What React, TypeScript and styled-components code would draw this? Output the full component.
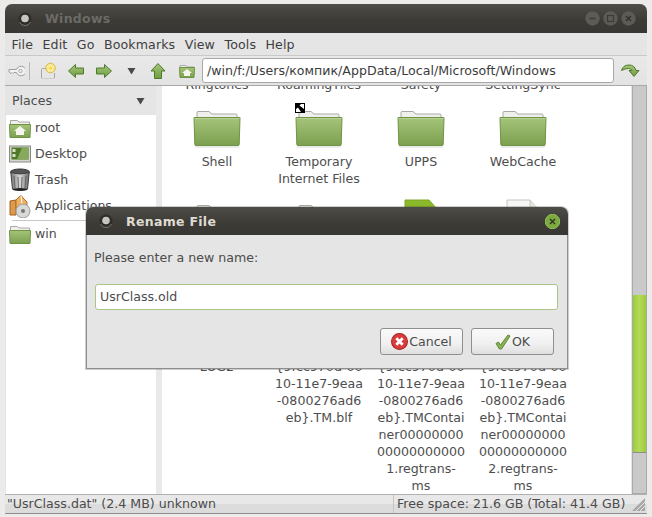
import React from "react";
import styled, { createGlobalStyle } from "styled-components";

const Global = createGlobalStyle`
  html, body { margin: 0; padding: 0; background: #ecebe9; }
  body { width: 652px; height: 517px; overflow: hidden; font-family: "DejaVu Sans", sans-serif; font-size: 12.6px; color: #4c4c4c; }
`;

const Page = styled.div`
  padding: 4px 5px 0 5px;
  width: 642px;
  height: 513px;
`;
const Win = styled.div`
  position: relative;
  width: 642px;
  height: 510px;
  display: flex;
  flex-direction: column;
  background: #e5e5e5;
  border-radius: 7px 7px 0 0;
  overflow: hidden;
  box-shadow: inset 0 -1px 0 #8e8e8e;
`;
const TitleBar = styled.div`
  height: 29px;
  flex: none;
  display: flex;
  align-items: center;
  padding: 0 11px 0 11px;
  background: linear-gradient(#4e4d48, #3c3b36 55%, #383733);
`;
const TitleText = styled.div<{ $active?: boolean }>`
  font-weight: bold;
  font-size: 12.5px;
  letter-spacing: 0.3px;
  margin-left: 11px;
  color: ${(p) => (p.$active ? "#dfdbd2" : "#6c6b66")};
`;
const TitleSpacer = styled.div`
  flex: 1;
`;
const WinBtns = styled.div`
  display: flex;
  gap: 3px;
`;
const MenuBar = styled.div`
  height: 22px;
  flex: none;
  display: flex;
  align-items: center;
  gap: 9.5px;
  padding-left: 6.5px;
  background: #e5e5e5;
  letter-spacing: 0.1px;
  span { color: #3f3f3f; }
`;
const ToolBar = styled.div`
  flex: none;
  display: flex;
  align-items: center;
  padding-left: 2px;
  background: linear-gradient(#e9e9e9, #e3e3e3);
  border-top: 1px solid #c9c9c9;
  border-bottom: 1px solid #a8a8a8;
  box-sizing: border-box;
  height: 31px;
`;
const ToolIcon = styled.div<{ $w: number; $ml?: number }>`
  width: ${(p) => p.$w}px;
  margin-left: ${(p) => p.$ml ?? 0}px;
  height: 22px;
  flex: none;
  display: flex;
  align-items: center;
  justify-content: center;
`;
const ToolSep = styled.div`
  width: 1px;
  height: 18px;
  background: #b8b8b8;
  margin: 0 9px 0 4px;
`;
const PathEntry = styled.div`
  width: 412px;
  height: 25px;
  flex: none;
  margin-left: 6px;
  box-sizing: border-box;
  border: 1px solid #a9a9a9;
  border-radius: 3px;
  background: #fff;
  padding-left: 4px;
  display: flex;
  align-items: center;
  color: #3c3c3c;
  white-space: nowrap;
`;
const Main = styled.div`
  flex: 1;
  min-height: 0;
  display: flex;
`;
const Side = styled.div`
  width: 151px;
  flex: none;
  display: flex;
  flex-direction: column;
`;
const SideHead = styled.div`
  height: 29px;
  flex: none;
  display: flex;
  align-items: center;
  justify-content: space-between;
  padding: 0 11px 0 7px;
`;
const SideList = styled.div`
  flex: 1;
  background: #fff;
  margin-left: 1px;
  display: flex;
  flex-direction: column;
`;
const SideRow = styled.div`
  height: 26px;
  flex: none;
  display: flex;
  align-items: center;
  gap: 4px;
  padding-left: 3px;
  white-space: nowrap;
`;
const SideName = styled.span`
  padding-bottom: 2px;
`;
const SideDivider = styled.div`
  height: 1px;
  margin: 1px 0 0 6px;
  background: #c8c8c8;
`;
const Sash = styled.div`
  width: 6px;
  flex: none;
  background: #e9e9e9;
`;
const IconView = styled.div`
  width: 469px;
  flex: none;
  background: #fff;
  overflow: hidden;
`;
const IconGrid = styled.div`
  margin: -10px 0 0 4px;
  display: grid;
  grid-template-columns: repeat(4, 102px);
  grid-template-rows: 29px 94px 111px auto;
`;
const Cell = styled.div`
  display: flex;
  flex-direction: column;
  align-items: center;
`;
const IconBox = styled.div`
  position: relative;
  width: 48px;
  height: 48px;
  flex: none;
`;
const Emblem = styled.div`
  position: absolute;
  left: 0;
  top: -2px;
  width: 10px;
  height: 10px;
  box-sizing: border-box;
  background: #fff;
  border: 1px solid #000;
  line-height: 0;
`;
const Label = styled.div`
  text-align: center;
  line-height: 17px;
  white-space: nowrap;
  color: #4e4e4e;
`;
const ScrollTrack = styled.div`
  width: 15px;
  flex: none;
  margin-left: 1px;
  box-sizing: border-box;
  background: #c9c9c9;
  border: 1px solid #a9a9a9;
  border-width: 0 1px 1px 1px;
  padding-top: 209px;
`;
const ScrollThumb = styled.div`
  height: 157px;
  background: linear-gradient(90deg, #9bcb3c, #b4dc58 50%, #9bcb3c);
  border-bottom: 1px solid #8d8d8d;
`;
const Status = styled.div`
  height: 20px;
  flex: none;
  box-sizing: border-box;
  display: flex;
  align-items: center;
  border-top: 1px solid #b0b0b0;
  border-bottom: 1px solid #8e8e8e;
  background: linear-gradient(#e8e8e8 50%, #dcdcdc 50%);
  white-space: nowrap;
`;
const StatusLeft = styled.div`
  width: 389px;
  flex: none;
  box-sizing: border-box;
  padding: 0 0 1px 2px;
  border-right: 1px solid #c4c4c4;
  height: 100%;
  display: flex;
  align-items: center;
`;
const StatusRight = styled.div`
  flex: 1;
  padding: 0 0 1px 3px;
`;
const Grip = styled.div`
  width: 16px;
  height: 16px;
  flex: none;
  margin-right: 1px;
`;
const Dialog = styled.div`
  position: absolute;
  left: 81px;
  top: 203px;
  width: 482px;
  height: 162px;
  display: flex;
  flex-direction: column;
  border-radius: 7px 7px 0 0;
  overflow: hidden;
  background: #e5e5e5;
  box-shadow: 0 0 0 1px rgba(60, 60, 60, 0.25);
`;
const DialogBar = styled.div`
  height: 28px;
  flex: none;
  display: flex;
  align-items: center;
  padding: 0 8px 0 11px;
  background: linear-gradient(#4e4d48, #3c3b36 55%, #383733);
`;
const DialogBody = styled.div`
  flex: 1;
  box-sizing: border-box;
  border: 1px solid #8f8f8f;
  border-top: 0;
  padding: 14px 8px 0 7px;
  display: flex;
  flex-direction: column;
`;
const Prompt = styled.div`
  line-height: 17px;
`;
const NameEntry = styled.div`
  margin: 18px 1px 0 1px;
  height: 26px;
  box-sizing: border-box;
  border: 1px solid #a9c588;
  border-radius: 3px;
  background: #fff;
  padding: 0 0 2px 4px;
  display: flex;
  align-items: center;
`;
const DialogBtns = styled.div`
  display: flex;
  justify-content: flex-end;
  gap: 8px;
  margin: 18px 5px 0 0;
`;
const Btn = styled.div`
  width: 83px;
  height: 27px;
  box-sizing: border-box;
  border: 1px solid #8f8f8f;
  border-radius: 3px;
  background: linear-gradient(#fafafa, #f0f0f0 60%, #dedede);
  display: flex;
  align-items: center;
  justify-content: center;
  gap: 1px;
`;

const Defs = () => (
  <svg width="0" height="0" style={{ position: "absolute" }}>
    <defs>
      <linearGradient id="fg" x1="0" y1="0" x2="0" y2="1">
        <stop offset="0" stopColor="#a5c47a" />
        <stop offset="1" stopColor="#7ca04f" />
      </linearGradient>
      <linearGradient id="ag" x1="0" y1="0" x2="0" y2="1">
        <stop offset="0" stopColor="#a4c879" />
        <stop offset="1" stopColor="#6f9a42" />
      </linearGradient>
      <linearGradient id="cg" x1="0" y1="0" x2="1" y2="0">
        <stop offset="0" stopColor="#777" />
        <stop offset="0.5" stopColor="#d8d8d8" />
        <stop offset="1" stopColor="#666" />
      </linearGradient>
      <linearGradient id="dg" x1="0" y1="0" x2="0" y2="1">
        <stop offset="0" stopColor="#8cbb2a" />
        <stop offset="1" stopColor="#6f9a22" />
      </linearGradient>
    </defs>
  </svg>
);

const Folder48 = () => (
  <svg width="48" height="48" viewBox="0 0 48 48">
    <rect x="2" y="40" width="44" height="3" rx="1.5" fill="#000" opacity="0.08" />
    <path d="M4 14V7.5q0-1 1-1h11l3 2.500h24q1 0 1 1V14z" fill="#efefec" stroke="#a8a8a4" />
    <path d="M1 12.500h46l-.8 27q0 1-1 1H2.800q-1 0-1-1z" fill="url(#fg)" stroke="#6f9345" />
    <path d="M1.500 13.500h45" stroke="#b8d296" />
  </svg>
);

const GreenDoc = () => (
  <svg width="48" height="48" viewBox="0 0 48 48">
    <path d="M8 1h24l9 10v36H8z" fill="url(#dg)" stroke="#7da524" />
  </svg>
);
const WhiteDoc = () => (
  <svg width="48" height="48" viewBox="0 0 48 48">
    <path d="M8 1h23l9 10v36H8z" fill="#f6f6f4" stroke="#c4c4c0" />
    <path d="M31 1v10h9" fill="#e4e4e0" stroke="#c4c4c0" />
  </svg>
);

const FolderSmall = ({ home }: { home?: boolean }) => (
  <svg width="22" height="22" viewBox="0 0 22 22">
    <path d="M1.500 8V3.500h7l1.500 1.500h10.500V8z" fill="#efefec" stroke="#a8a8a4" />
    <path d="M.5 7.500h21l-.5 13H1z" fill="url(#fg)" stroke="#6f9345" />
    {home && <path d="M11 9l6 5h-2v4h-8v-4H5z" fill="#f4f6ee" />}
  </svg>
);
const DesktopIco = () => (
  <svg width="22" height="22" viewBox="0 0 22 22">
    <rect x=".5" y="1.500" width="21" height="16" fill="#d4d4d0" stroke="#8a8a86" transform="translate(0 1.500)" />
    <rect x="2.500" y="4.500" width="17" height="12" fill="#4f7a26" />
    <path d="M8 16.500l5-12h6.500v12z" fill="#86a95c" />
    <rect x="3.500" y="6" width="3" height="3" fill="#d8e4c4" />
    <rect x="3.500" y="11" width="3" height="3" fill="#d8e4c4" />
  </svg>
);
const TrashIco = () => (
  <svg width="22" height="24" viewBox="0 0 22 24">
    <ellipse cx="11" cy="4" rx="9.500" ry="3" fill="#555" stroke="#333" />
    <path d="M1.800 4.500L3.500 21q7.500 3 15 0l1.700-16.500q-9 3-18.400 0z" fill="url(#cg)" stroke="#444" />
    <path d="M5 8l1 12M9 9l.5 12M13 9l-.5 12M17 8l-1 12" stroke="#555" strokeWidth=".8" />
    <ellipse cx="11" cy="21.500" rx="7.500" ry="1.500" fill="#222" />
  </svg>
);
const AppsIco = () => (
  <svg width="22" height="24" viewBox="0 0 22 24">
    <path d="M1 7l6-1v15H1z" fill="#dc9a4e" stroke="#a2601e" />
    <path d="M7 6l5-5 2 3 4 4v6H7z" fill="#efb060" stroke="#b06e26" />
    <path d="M12 1l1 9" stroke="#fff" />
    <circle cx="14" cy="17" r="7" fill="#d8d8d6" stroke="#9a9a98" />
    <circle cx="14" cy="17" r="2" fill="#777" />
  </svg>
);

const Arrow = ({ d }: { d: string }) => (
  <svg width="18" height="18" viewBox="0 0 18 18">
    <path d={d} fill="url(#ag)" stroke="#4f7a2c" />
  </svg>
);

const WinBtn = ({ kind, lit }: { kind: "min" | "max" | "close"; lit?: boolean }) => (
  <svg width="15" height="15" viewBox="0 0 15 15">
    <circle cx="7.500" cy="7.500" r="7.200" fill={lit ? "#7aab3c" : "#5c5b56"} stroke={lit ? "#94c25c" : "none"} />
    {kind === "min" && <path d="M4.500 7.500h6" stroke="#3c3b37" strokeWidth="1.300" />}
    {kind === "max" && <rect x="4.500" y="4.500" width="6" height="6" fill="none" stroke="#3c3b37" strokeWidth="1.200" />}
    {kind === "close" && <path d="M5 5l5 5M10 5l-5 5" stroke="#2f2e2a" strokeWidth="1.300" />}
  </svg>
);
const MenuDot = () => (
  <svg width="18" height="18" viewBox="0 0 18 18">
    <circle cx="9" cy="9" r="6.500" fill="#2e2d2a" />
    <path d="M3.500 12a6 6 0 0 0 11 0" fill="none" stroke="#77766f" strokeWidth="1" />
    <circle cx="9" cy="8.500" r="3.800" fill="#c6c5bf" />
  </svg>
);
const Tri = () => (
  <svg width="9" height="8" viewBox="0 0 9 8">
    <path d="M.5 1h8l-4 6.500z" fill="#4a4a4a" />
  </svg>
);

const FILES: { lines: string[]; icon?: React.ReactNode; emblem?: boolean }[] = [
  { lines: ["Ringtones"] },
  { lines: ["RoamingTiles"] },
  { lines: ["Safety"] },
  { lines: ["SettingSync"] },
  { lines: ["Shell"], icon: <Folder48 /> },
  { lines: ["Temporary", "Internet Files"], icon: <Folder48 />, emblem: true },
  { lines: ["UPPS"], icon: <Folder48 /> },
  { lines: ["WebCache"], icon: <Folder48 /> },
  { lines: [], icon: <Folder48 /> },
  { lines: [], icon: <Folder48 /> },
  { lines: [], icon: <GreenDoc /> },
  { lines: [], icon: <WhiteDoc /> },
  { lines: ["LOG2"], icon: <WhiteDoc /> },
  { lines: ["{9fcc970d-00", "10-11e7-9eaa", "-0800276ad6", "eb}.TM.blf"], icon: <WhiteDoc /> },
  { lines: ["{9fcc970d-00", "10-11e7-9eaa", "-0800276ad6", "eb}.TMContai", "ner00000000", "00000000000", "1.regtrans-", "ms"], icon: <WhiteDoc /> },
  { lines: ["{9fcc970d-00", "10-11e7-9eaa", "-0800276ad6", "eb}.TMContai", "ner00000000", "00000000000", "2.regtrans-", "ms"], icon: <WhiteDoc /> },
];

export default function App() {
  return (
    <>
      <Global />
      <Defs />
      <Page>
        <Win>
          <TitleBar>
            <MenuDot />
            <TitleText>Windows</TitleText>
            <TitleSpacer />
            <WinBtns>
              <WinBtn kind="min" />
              <WinBtn kind="max" />
              <WinBtn kind="close" />
            </WinBtns>
          </TitleBar>
          <MenuBar>
            {["File", "Edit", "Go", "Bookmarks", "View", "Tools", "Help"].map((m) => (
              <span key={m}>{m}</span>
            ))}
          </MenuBar>
          <ToolBar>
            <ToolIcon $w={18}>
              <svg width="17" height="12" viewBox="0 0 17 12">
                <path d="M1 4.500h7.500a4.800 4.800 0 1 1 0 3H6l-1 1-1-1-1 1-2-1.500z" fill="#f2f2f2" stroke="#9c9c9c" />
                <circle cx="12.500" cy="6" r="1.700" fill="none" stroke="#a8a8a8" />
              </svg>
            </ToolIcon>
            <ToolSep />
            <ToolIcon $w={18}>
              <svg width="18" height="18" viewBox="0 0 18 18">
                <path d="M2.500 16.500V7.500q0-1 1-1h5M15.500 11v5.500" fill="none" stroke="#a5a5a5" />
                <path d="M2 16.500h14" stroke="#cfcfcf" />
                <circle cx="11.500" cy="6" r="4.800" fill="#f6e58a" stroke="#d8b94a" />
                <path d="M11.500 2.600l1 2.300 2.400.2-1.800 1.600.5 2.400-2.100-1.300-2.100 1.300.5-2.400L8.100 5.100l2.400-.2z" fill="#f9d83e" stroke="#fff" strokeWidth=".5" />
              </svg>
            </ToolIcon>
            <ToolIcon $w={38}>
              <Arrow d="M1.500 9L8.500 2.500V6h8v6h-8v3.500z" />
            </ToolIcon>
            <ToolIcon $w={18}>
              <Arrow d="M16.500 9L9.500 2.500V6h-8v6h8v3.500z" />
            </ToolIcon>
            <ToolIcon $w={36}>
              <Tri />
            </ToolIcon>
            <ToolIcon $w={18}>
              <Arrow d="M9 1.500L16 9h-3.500v7.500h-7V9H2z" />
            </ToolIcon>
            <ToolIcon $w={18} $ml={11}>
              <svg width="18" height="18" viewBox="0 0 18 18">
                <path d="M2 6V3.500h6l1.500 1.500H16V6z" fill="#efefec" stroke="#a8a8a4" />
                <path d="M1.500 5.500h15l-.5 10H2z" fill="url(#fg)" stroke="#6f9345" />
                <path d="M9 7l5 4h-2v3H6v-3H4z" fill="#f4f6ee" />
              </svg>
            </ToolIcon>
            <PathEntry>/win/f:/Users/компик/AppData/Local/Microsoft/Windows</PathEntry>
            <ToolIcon $w={32}>
              <svg width="20" height="18" viewBox="0 0 20 18">
                <path d="M1.500 8.500Q3 3 9 3q5.500 0 7 5.500H19l-5 6-5-6h3Q11 6.500 8.500 6.500 5 6.500 1.500 8.500z" fill="url(#ag)" stroke="#4f7a2c" />
              </svg>
            </ToolIcon>
          </ToolBar>
          <Main>
            <Side>
              <SideHead>
                <span>Places</span>
                <Tri />
              </SideHead>
              <SideList>
                <SideRow>
                  <FolderSmall home />
                  <SideName>root</SideName>
                </SideRow>
                <SideRow>
                  <DesktopIco />
                  <SideName>Desktop</SideName>
                </SideRow>
                <SideRow>
                  <TrashIco />
                  <SideName>Trash</SideName>
                </SideRow>
                <SideRow>
                  <AppsIco />
                  <SideName>Applications</SideName>
                </SideRow>
                <SideDivider />
                <SideRow>
                  <FolderSmall />
                  <SideName>win</SideName>
                </SideRow>
              </SideList>
            </Side>
            <Sash />
            <IconView>
              <IconGrid>
                {FILES.map((f, i) => (
                  <Cell key={i}>
                    {f.icon && (
                      <IconBox>
                        {f.icon}
                        {f.emblem && (
                          <Emblem>
                            <svg width="8" height="8" viewBox="0 0 8 8">
                              <path d="M0 0h5L3.500 1.500 8 5v3H5L2 3.500 0 5z" fill="#000" />
                            </svg>
                          </Emblem>
                        )}
                      </IconBox>
                    )}
                    <Label>
                      {f.lines.map((l) => (
                        <div key={l}>{l}</div>
                      ))}
                    </Label>
                  </Cell>
                ))}
              </IconGrid>
            </IconView>
            <ScrollTrack>
              <ScrollThumb />
            </ScrollTrack>
          </Main>
          <Status>
            <StatusLeft>"UsrClass.dat" (2.4 MB) unknown</StatusLeft>
            <StatusRight>Free space: 21.6 GB (Total: 41.4 GB)</StatusRight>
            <Grip>
              <svg width="16" height="16" viewBox="0 0 16 16">
                <path d="M15 2L2 15h13z" fill="#a8a8a8" />
                <path d="M15 6l-9 9M15 10l-5 5" stroke="#e8e8e8" />
              </svg>
            </Grip>
          </Status>
          <Dialog>
            <DialogBar>
              <MenuDot />
              <TitleText $active>Rename File</TitleText>
              <TitleSpacer />
              <WinBtn kind="close" lit />
            </DialogBar>
            <DialogBody>
              <Prompt>Please enter a new name:</Prompt>
              <NameEntry>UsrClass.old</NameEntry>
              <DialogBtns>
                <Btn>
                  <svg width="17" height="17" viewBox="0 0 16 16">
                    <circle cx="8" cy="8" r="7.500" fill="#d83c3c" stroke="#a92626" />
                    <path d="M5 5l6 6M11 5l-6 6" stroke="#fff" strokeWidth="2.600" />
                  </svg>
                  <span>Cancel</span>
                </Btn>
                <Btn>
                  <svg width="16" height="16" viewBox="0 0 16 16">
                    <path d="M1 9.500l2.500-1.500 2 3L13 1l2 1-8.500 13H4.500z" fill="#8cb258" stroke="#5d8730" />
                  </svg>
                  <span>OK</span>
                </Btn>
              </DialogBtns>
            </DialogBody>
          </Dialog>
        </Win>
      </Page>
    </>
  );
}
